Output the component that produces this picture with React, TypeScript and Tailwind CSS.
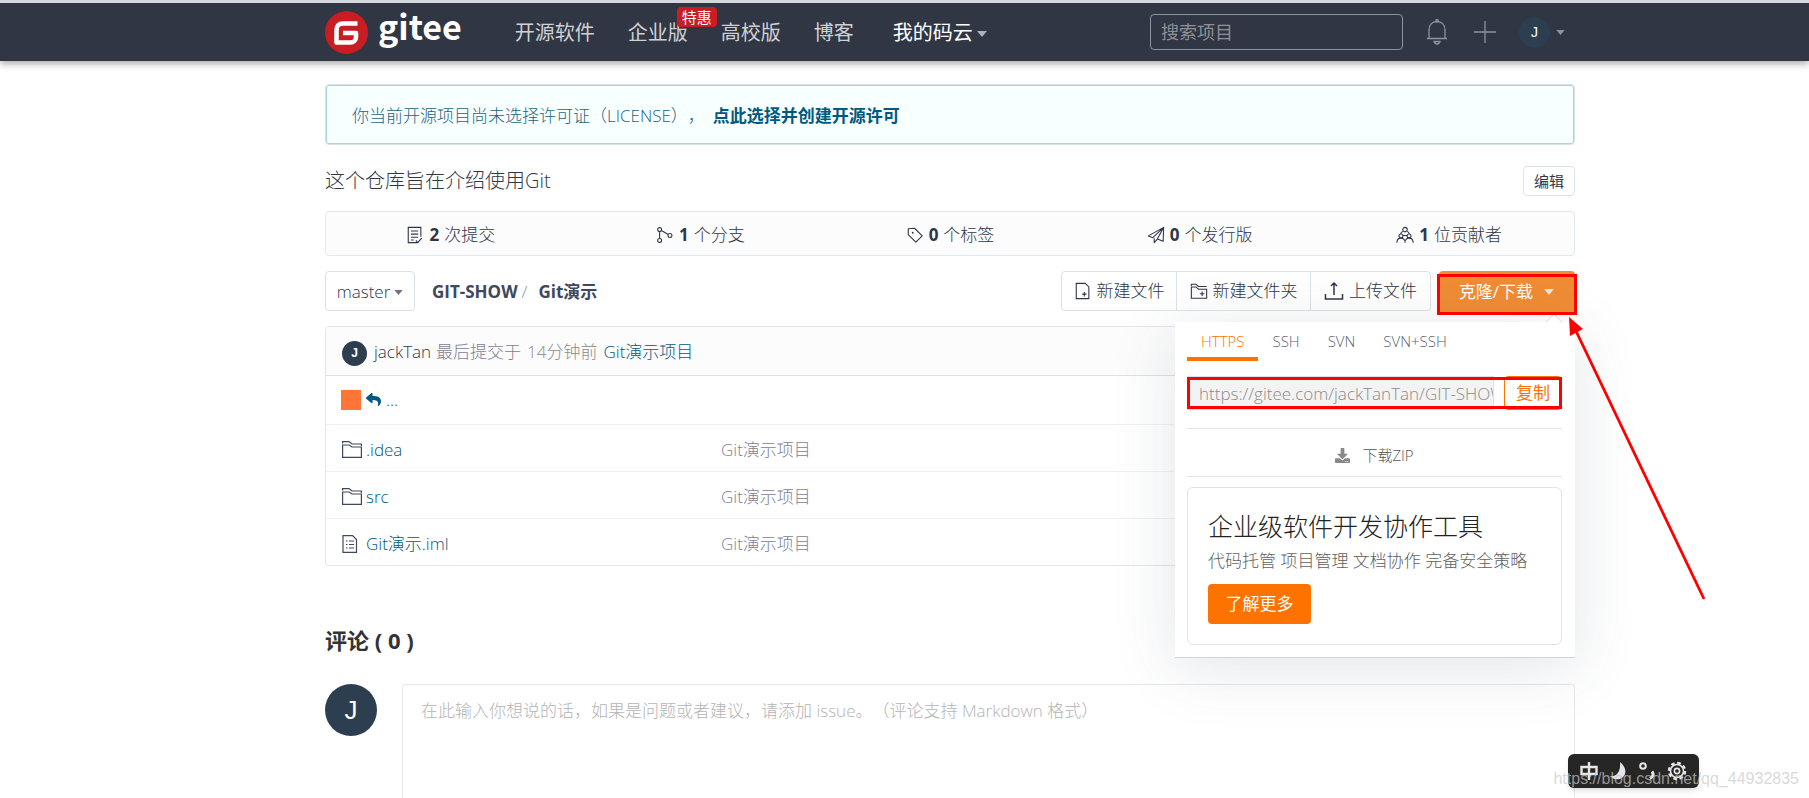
import type { ReactNode } from 'react'
import { FaDownload, FaReply } from 'react-icons/fa'

const stats = [
  { icon: <CommitIcon />, count: 2, label: '次提交' },
  { icon: <BranchIcon />, count: 1, label: '个分支' },
  { icon: <TagIcon />, count: 0, label: '个标签' },
  { icon: <PlaneIcon />, count: 0, label: '个发行版' },
  { icon: <PeopleIcon />, count: 1, label: '位贡献者' },
]

const files = [
  { icon: <FolderIcon />, name: '.idea', message: 'Git演示项目' },
  { icon: <FolderIcon />, name: 'src', message: 'Git演示项目' },
  { icon: <FileIcon />, name: 'Git演示.iml', message: 'Git演示项目' },
]

const protocols = ['HTTPS', 'SSH', 'SVN', 'SVN+SSH']

function Icon({ size, children }: { size: 'sm' | 'md'; children: ReactNode }) {
  return (
    <svg
      viewBox="0 0 20 20"
      fill="none"
      stroke="currentColor"
      strokeWidth="1.2"
      className={size === 'sm' ? 'h-[18px] w-[18px] shrink-0' : 'h-5 w-5 shrink-0'}
    >
      {children}
    </svg>
  )
}

function CommitIcon() {
  return (
    <Icon size="sm">
      <path d="M16.5 12V1.5h-14v17h10M5.500 5.500h8M5.500 9h8M5.500 12.500h8M5.500 15.500h3M11 16l2 2.500 4.500-5" />
    </Icon>
  )
}

function BranchIcon() {
  return (
    <Icon size="sm">
      <circle cx="4" cy="4" r="2.200" />
      <circle cx="4" cy="16" r="2.200" />
      <circle cx="15.500" cy="10.500" r="2.200" />
      <path d="M4 6.200v7.600M6 5l7.600 4.500" />
    </Icon>
  )
}

function TagIcon() {
  return (
    <Icon size="sm">
      <path d="M2.500 3v6.500l8.500 8.500 7-7L9.500 2.500z" strokeLinejoin="round" />
      <circle cx="7.500" cy="7.500" r="1" fill="currentColor" stroke="none" />
    </Icon>
  )
}

function PlaneIcon() {
  return (
    <Icon size="sm">
      <path d="M18.500 1.500 1.500 11l5 2zM18.500 1.500l-.5 15.500-6.500-2.500zM8 13.500V18.500l3.500-4L18.500 1.500" strokeLinejoin="round" />
    </Icon>
  )
}

function PeopleIcon() {
  return (
    <Icon size="sm">
      <circle cx="10" cy="4" r="2.500" />
      <circle cx="5.500" cy="11" r="2.200" />
      <circle cx="14.500" cy="11" r="2.200" />
      <path d="M7.500 6C6 7 5.500 7.500 5.200 8.800M12.500 6c1.500 1 2 1.500 2.300 2.800M1 18.500c0-3 1.500-5 4.500-5.300 2 .1 3.500 1.300 4.500 3.300 1-2 2.500-3.200 4.500-3.300 3 .3 4.500 2.300 4.500 5.300M10 16.500v2M7.700 10.500h4.600" />
    </Icon>
  )
}

function NewFileIcon() {
  return (
    <Icon size="sm">
      <path d="M2.500 1.500h10l4 4v13h-14zM11.500 11v5M9 13.500h5" />
    </Icon>
  )
}

function NewFolderIcon() {
  return (
    <Icon size="sm">
      <path d="M1.500 4.500v-2h5l3 2.500h9M1.500 5.500h5l3 2.500h9v10h-17zM13.500 10.500v5M11 13h5" />
    </Icon>
  )
}

function UploadIcon() {
  return (
    <Icon size="md">
      <path d="M1.500 13v5h17v-5M10 14V2M7 5l3-3 3 3" strokeWidth="1.500" />
    </Icon>
  )
}

function FolderIcon() {
  return (
    <Icon size="md">
      <path d="M.6 3.500V1.600h6.500L10 4h9.400v2M.6 17.400V5h6.500L10 7h9.400v10.400z" />
    </Icon>
  )
}

function FileIcon() {
  return (
    <Icon size="md">
      <path d="M1 1.600h9.500l4 4v12.800H1zM4 7h1.500M7 7h5M4 10.500h1.500M7 10.500h5M4 14h1.500M7 14h5" />
    </Icon>
  )
}

function BellIcon() {
  return (
    <svg viewBox="0 0 22 26" fill="none" stroke="currentColor" strokeWidth="1.300" className="h-[26px] w-[22px]">
      <path d="M1 19.500h20M3 19.500V11c0-5 3-8.500 8-8.500s8 3.500 8 8.500v8.500M8 22.500c.5 1.500 1.500 2.500 3 2.500s2.500-1 3-2.500z" />
      <circle cx="11" cy="1.800" r="1.200" />
    </svg>
  )
}

function GiteeMark() {
  return (
    <svg viewBox="0 0 43 43" className="h-[43px] w-[43px]">
      <circle cx="21.500" cy="21.500" r="21.500" fill="#c71d23" />
      <path d="M32.500 12.500H18C14 12.500 11.500 15 11.500 19v12.500h14c3.200 0 5.500-2.200 5.500-5.500V22H18" fill="none" stroke="#fff" strokeWidth="4.600" strokeLinejoin="round" />
    </svg>
  )
}

function Caret({ className }: { className: string }) {
  return (
    <svg viewBox="0 0 10 6" fill="currentColor" className={className}>
      <path d="M0 0h10L5 6z" />
    </svg>
  )
}

function Header() {
  return (
    <header className="relative z-10 border-t-[3px] border-[#d5d9de] bg-[#303643] pl-[91px] shadow-[0_2px_8px_rgba(0,0,0,0.4)]">
      <div className="mx-auto flex h-[58px] max-w-[1250px] items-center">
        <a href="#" className="flex items-center gap-[10px]" aria-label="gitee">
          <GiteeMark />
          <span className="pb-3 font-['Noto_Sans_CJK_SC',sans-serif] text-[34px] leading-[42px] font-bold text-white">
            gitee
          </span>
        </a>
        <nav className="ml-[53px] flex items-center gap-[33px] pt-0.5 text-xl font-normal text-[#cfd1d4]">
          <a href="#">开源软件</a>
          <a href="#" className="relative">
            企业版
            <span className="absolute -top-3 left-[49px] rounded-sm bg-[#c71d23] px-[5px] text-[15px] leading-5 whitespace-nowrap text-white">
              特惠
            </span>
          </a>
          <a href="#">高校版</a>
          <a href="#">博客</a>
          <button type="button" className="flex items-center gap-1 pl-[6px] text-white">
            我的码云
            <Caret className="mt-[2px] h-[6px] w-[10px] text-[#adb1bb]" />
          </button>
        </nav>
        <div className="ml-auto flex items-center text-[#8d92a3]">
          <input
            type="search"
            aria-label="搜索项目"
            placeholder="搜索项目"
            className="h-9 w-[253px] rounded border border-[#8d92a3] bg-transparent px-[10px] text-lg font-normal text-white placeholder:text-[#8f9195]"
          />
          <button type="button" aria-label="通知" className="ml-[23px]">
            <BellIcon />
          </button>
          <button type="button" aria-label="新建" className="ml-[26px]">
            <svg viewBox="0 0 22 22" stroke="currentColor" strokeWidth="1.300" className="h-[22px] w-[22px]">
              <path d="M11 0v22M0 11h22" />
            </svg>
          </button>
          <button type="button" className="mr-[10px] ml-[23px] flex items-center gap-[6px]">
            <span className="flex h-[31px] w-[31px] items-center justify-center rounded-full bg-[#2c3e50] font-['Liberation_Sans',sans-serif] text-sm font-medium text-white">
              J
            </span>
            <Caret className="h-[5px] w-[9px]" />
          </button>
        </div>
      </div>
    </header>
  )
}

function ClonePanel() {
  return (
    <div className="absolute top-[51px] right-0 z-20 w-[400px] border-b border-[#d4d4d5] bg-white pr-[13px] pb-3 pl-3 shadow-[0_10px_60px_rgba(60,70,100,0.14)]">
      <span className="absolute -top-[6px] right-[15px] h-3 w-3 rotate-45 border-t border-l border-[#e0e0e2] bg-white" />
      <div className="relative flex text-[15px]">
        {protocols.map((name, i) => (
          <button
            key={name}
            type="button"
            className={
              i === 0
                ? 'h-[39px] border-b-4 border-[#fe7300] px-[14px] pt-1 text-[#fe7300]'
                : 'h-[39px] border-b-4 border-transparent px-[14px] pt-1 text-[#5b6072]'
            }
          >
            {name}
          </button>
        ))}
      </div>
      <div className="relative mt-[15px] flex justify-between">
        <input
          readOnly
          aria-label="仓库地址"
          value="https://gitee.com/jackTanTan/GIT-SHOW.git"
          className="h-[34px] w-[307px] border border-[#dce3e8] bg-[#f3f3f3] pl-[11px] text-[17px] text-[#8b8b8b]"
        />
        <button type="button" className="h-[34px] w-[58px] rounded-sm border border-[#fe7300] text-[17px] font-normal text-[#fe7300]">
          复制
        </button>
        <span className="pointer-events-none absolute inset-x-0 top-px bottom-px border-[3px] border-[#fe0000]" />
      </div>
      <a
        href="#"
        className="mt-[18px] flex h-[49px] items-center justify-center gap-3 border-y border-[#e6e6e6] pt-[6px] text-[15px] text-[#555]"
      >
        <FaDownload className="h-[15px] w-[15px] text-[#888]" />
        下载ZIP
      </a>
      <div className="mt-[10px] rounded-md border border-[#e3e3e5] px-5 pt-[21px] pb-5">
        <h3 className="text-[25px] leading-[34px] text-[#222]">企业级软件开发协作工具</h3>
        <p className="mt-1 text-[17px] leading-7 whitespace-nowrap text-[#5f5f5f]">
          代码托管 项目管理 文档协作 完备安全策略
        </p>
        <button type="button" className="mt-[9px] h-10 w-[103px] rounded-sm bg-[#fe7300] text-[17px] font-normal text-white">
          了解更多
        </button>
      </div>
    </div>
  )
}

function Toolbar() {
  return (
    <div className="mt-[15px] flex h-10 items-stretch text-[17px] text-[#2f3648]">
      <button type="button" className="flex w-[90px] items-center justify-center gap-1 rounded-sm border border-[#dce3e8] pt-0.5">
        master
        <Caret className="h-[5px] w-[9px] text-[#6d7280]" />
      </button>
      <div className="ml-[17px] flex items-center pt-0.5 font-bold text-[#40485b]">
        <a href="#">GIT-SHOW</a>
        <span className="mx-1 font-light text-[#8c92a4]">/</span>
        <a href="#" className="ml-[7px]">Git演示</a>
      </div>
      <div className="ml-auto flex rounded border border-[#dce3e8]">
        <button type="button" className="flex w-[115px] items-center justify-center gap-[5px] border-r border-[#dce3e8]">
          <NewFileIcon />
          新建文件
        </button>
        <button type="button" className="flex w-[134px] items-center justify-center gap-[5px] border-r border-[#dce3e8]">
          <NewFolderIcon />
          新建文件夹
        </button>
        <button type="button" className="flex w-[119px] items-center justify-center gap-[5px]">
          <UploadIcon />
          上传文件
        </button>
      </div>
      <div className="relative ml-2">
        <button
          type="button"
          className="flex h-[42px] w-[136px] items-center justify-center gap-[10px] rounded-sm bg-[#f08c34] text-[17px] font-normal text-white"
        >
          克隆/下载
          <Caret className="h-[6px] w-[12px] text-[#fbe3cc]" />
        </button>
        <ClonePanel />
        {/* hand-drawn marks pointing at the clone button */}
        <span className="pointer-events-none absolute top-[3px] -right-0.5 -left-0.5 z-30 h-[41px] border-[3px] border-[#fe0000]" />
        <svg viewBox="0 0 140 286" className="pointer-events-none absolute top-[46px] left-[129px] z-30 h-[286px] w-[140px]">
          <path d="M136 282 8 14" stroke="#fe0000" strokeWidth="2.800" />
          <path d="M1 0 15 12 2 19z" fill="#fe0000" />
        </svg>
      </div>
    </div>
  )
}

function FileTable() {
  return (
    <div className="mt-[15px] overflow-hidden rounded border border-[#e0e7ec] text-[17px]">
      <div className="flex h-[49px] items-center border-b border-[#dfe2e5] bg-[#fcfcfc] pt-0.5 pl-4">
        <span className="mt-0.5 flex h-[25px] w-[25px] items-center justify-center rounded-full bg-[#2c3e50] font-['Liberation_Sans',sans-serif] text-xs font-bold text-white">
          J
        </span>
        <a href="#" className="ml-[7px] text-[#2f3648]">jackTan</a>
        <span className="ml-[5px] text-[#7b8195]">最后提交于</span>
        <span className="ml-[6px] text-[#8b8b8b]">14分钟前</span>
        <a href="#" className="ml-[6px] text-[#005980]">Git演示项目</a>
      </div>
      <table className="w-full table-fixed">
        <tbody>
          <tr className="h-[48px]">
            <td className="w-[395px] pl-[15px]">
              <a href="#" className="flex items-center gap-[5px] text-[#005980]">
                <span className="h-5 w-5 bg-[#fe7535]" />
                <FaReply className="h-[15px] w-[15px]" />
                ...
              </a>
            </td>
            <td />
          </tr>
          {files.map((file) => (
            <tr key={file.name} className="h-[47px] border-t border-[#edf2f5]">
              <td className="pt-1 pl-4">
                <a href="#" className="flex items-center gap-1 text-[#40485b]">
                  {file.icon}
                  <span className="text-[#005980]">{file.name}</span>
                </a>
              </td>
              <td className="pt-1 text-[#7b8195]">{file.message}</td>
            </tr>
          ))}
        </tbody>
      </table>
    </div>
  )
}

function InputMethodBar() {
  return (
    <div className="absolute right-[110px] bottom-[10px] z-40 flex h-[34px] w-[131px] items-center justify-between rounded-md bg-[#262626] px-3 text-[#e6e6e6] shadow-md">
      <svg viewBox="0 0 18 18" fill="none" stroke="currentColor" strokeWidth="2.400" className="h-[18px] w-[18px]">
        <path d="M1.500 5h15v7h-15zM9 0v18" />
      </svg>
      <svg viewBox="0 0 16 18" fill="currentColor" className="h-[18px] w-4">
        <path d="M10 0c6 5 7 11 3 15-4 3.500-9 3-13-1 6 1 11-4 10-14z" />
      </svg>
      <svg viewBox="0 0 16 18" fill="none" stroke="currentColor" strokeWidth="2" className="h-[18px] w-4">
        <circle cx="4" cy="4" r="2.800" />
        <path d="M13 9.500c2 2.500 1 5.500-2 7" strokeWidth="3" />
      </svg>
      <svg viewBox="0 0 20 20" fill="none" stroke="currentColor" strokeWidth="1.600" className="h-5 w-5">
        <circle cx="10" cy="10" r="8" strokeWidth="2.500" strokeDasharray="3.600 2.680" />
        <circle cx="10" cy="10" r="6.500" />
        <circle cx="10" cy="10" r="2.600" />
      </svg>
    </div>
  )
}

export default function App() {
  return (
    <div className="relative flex min-h-screen flex-col overflow-hidden bg-white font-['Open_Sans','Noto_Sans_CJK_SC',sans-serif] font-light [text-spacing-trim:space-all]">
      <Header />
      <main className="flex flex-1 flex-col pl-[91px]">
        <div className="mx-auto flex w-full max-w-[1250px] flex-1 flex-col pt-[23px]">
          <div className="flex h-[61px] items-center gap-2 rounded border border-[#d5e3e8] bg-[#f8ffff] px-[26px] pt-0.5 text-[17px] text-[#1d6480] shadow-[inset_0_0_0_1px_#a9d5de]">
            <span>你当前开源项目尚未选择许可证（LICENSE），</span>
            <a href="#" className="font-bold text-[#005980]">点此选择并创建开源许可</a>
          </div>

          <div className="mt-[21px] flex items-center justify-between text-[#2f3648]">
            <p className="text-xl leading-7">这个仓库旨在介绍使用Git</p>
            <button type="button" className="h-[30px] w-[52px] rounded-sm border border-[#dce3e8] text-[15px] font-normal">
              编辑
            </button>
          </div>

          <ul className="mt-[15px] grid h-[45px] grid-cols-5 items-center rounded border border-[#e3e9ed] bg-[#fcfcfc] pt-[3px] text-[17px] text-[#2f3648]">
            {stats.map((stat) => (
              <li key={stat.label}>
                <a href="#" className="flex items-center justify-center gap-[5px]">
                  {stat.icon}
                  <b className="font-bold">{stat.count}</b>
                  {stat.label}
                </a>
              </li>
            ))}
          </ul>

          <Toolbar />
          <FileTable />

          <h2 className="mt-[58px] text-[22px] leading-8 font-bold text-[#333]">评论 ( 0 )</h2>
          <div className="mt-7 flex flex-1 gap-[25px]">
            <span className="flex h-[52px] w-[52px] shrink-0 items-center justify-center rounded-full bg-[#2c3e50] font-['Liberation_Sans',sans-serif] text-[26px] font-normal text-white">
              J
            </span>
            <textarea
              aria-label="评论"
              placeholder="在此输入你想说的话，如果是问题或者建议，请添加 issue。（评论支持 Markdown 格式）"
              className="min-h-[114px] flex-1 resize-none rounded-t-sm border border-b-0 border-[#e8e8e8] px-[18px] pt-3 text-[17px] leading-7 placeholder:text-[#b4b4b4]"
            />
          </div>
        </div>
      </main>
      <InputMethodBar />
      <span className="pointer-events-none absolute right-[10px] bottom-[7px] z-50 font-['Liberation_Sans',sans-serif] text-base leading-6 font-normal text-[#c8c8c8]/70">
        https://blog.csdn.net/qq_44932835
      </span>
    </div>
  )
}
